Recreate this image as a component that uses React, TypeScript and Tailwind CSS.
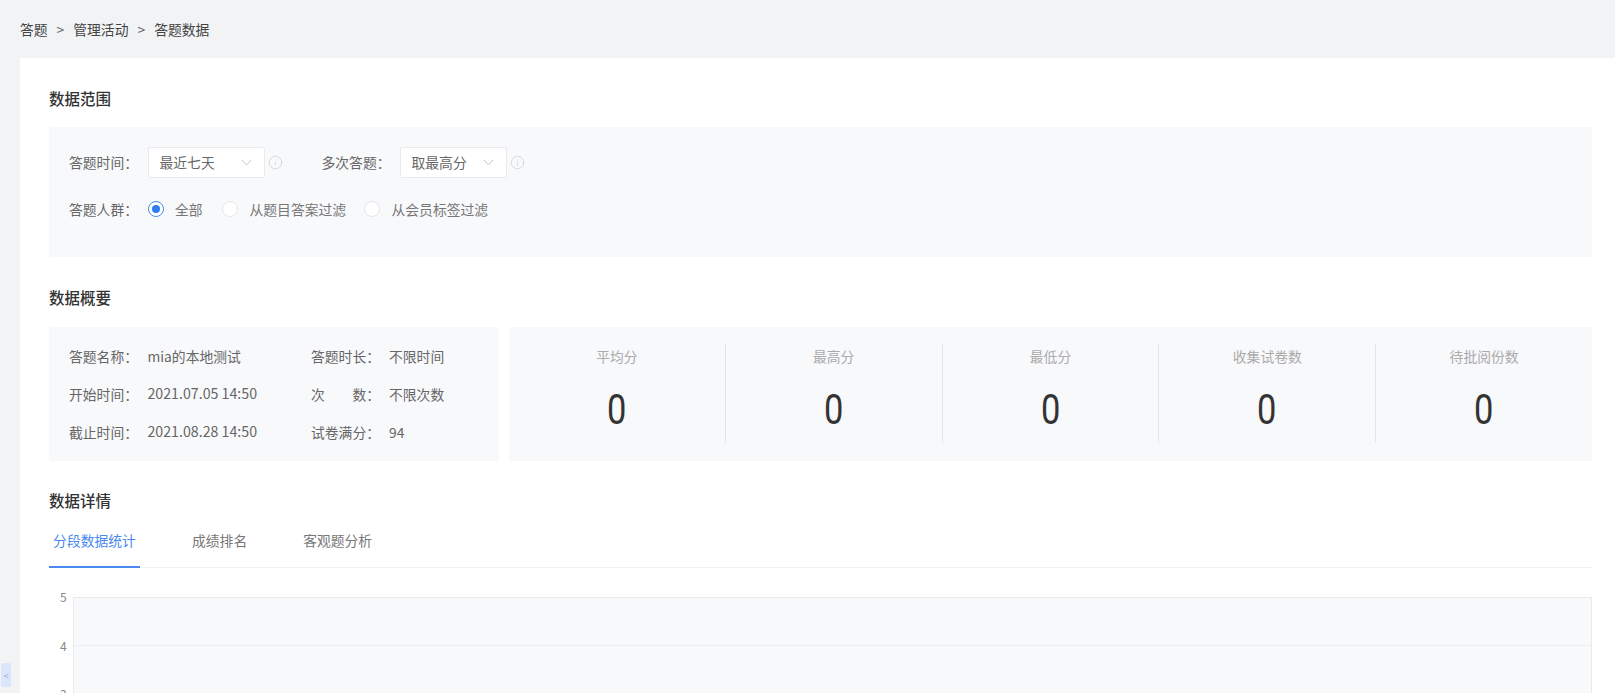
import { Info } from "lucide-react";

const FONT = "font-['Noto_Sans_CJK_SC','Noto_Sans',sans-serif]";

function Heading({ children }: { children: string }) {
  return <h2 className="h-[22px] text-[15.5px] leading-[20px] font-medium text-[#333]">{children}</h2>;
}

function Select({ value, width }: { value: string; width: string }) {
  return (
    <div className={`flex h-[31px] items-center justify-between rounded-[2px] border border-[#e8eaee] bg-white pl-[11px] pr-[12px] text-[13.8px] text-[#666] ${width}`}>
      <span>{value}</span>
      <svg width="11" height="7" viewBox="0 0 11 7" fill="none" stroke="#c4c7cc" strokeWidth="1">
        <path d="M1 1l4.5 5L10 1" />
      </svg>
    </div>
  );
}

function Radio({ label, checked, className }: { label: string; checked?: boolean; className: string }) {
  return (
    <div className={`flex items-center ${className}`}>
      <span className={`flex h-[16px] w-[16px] items-center justify-center rounded-full border bg-white ${checked ? "border-[#4a8af0]" : "border-[#e4e6ea]"}`}>
        {checked && <span className="h-[8px] w-[8px] rounded-full bg-[#2f7bf0]" />}
      </span>
      <span className="ml-[11.5px] text-[13.8px] text-[#777]">{label}</span>
    </div>
  );
}

function Row({ label, value, label2, value2, className, valueClass }: { label: string; value: string; label2: string; value2: string; className?: string; valueClass?: string }) {
  return (
    <div className={`flex h-[20px] items-center text-[13.8px] text-[#666] ${className ?? ""}`}>
      <span className="w-[78.5px]">{label}</span>
      <span className={`w-[163.5px] ${valueClass ?? ""}`}>{value}</span>
      <span className="w-[78px]">{label2}</span>
      <span>{value2}</span>
    </div>
  );
}

const stats = ["平均分", "最高分", "最低分", "收集试卷数", "待批阅份数"];

export default function App() {
  return (
    <div className={`relative h-[693px] overflow-hidden bg-[#f2f3f5] ${FONT}`}>
      {/* 面包屑 */}
      <div className="flex h-[58px] items-center pl-[20px] text-[13.8px] text-[#444]">
        <span>答题</span>
        <span className="ml-[9px] mr-[9px] text-[#666]">&gt;</span>
        <span>管理活动</span>
        <span className="ml-[9px] mr-[9px] text-[#666]">&gt;</span>
        <span>答题数据</span>
      </div>

      <div className="ml-[20px] h-[635px] bg-white pl-[29px] pr-[23px] pt-[30px]">
        {/* 数据范围 */}
        <Heading>数据范围</Heading>
        <div className="mt-[17px] h-[130px] bg-[#f8f9fb] pl-[20px] pt-[20px]">
          <div className="flex items-center">
            <span className="w-[78.5px] text-[13.8px] text-[#666]">答题时间：</span>
            <Select value="最近七天" width="w-[117px]" />
            <Info size={15} strokeWidth={1} className="ml-[3px] text-[#c4c7cc]" />
            <span className="ml-[39px] w-[78px] text-[13.8px] text-[#666]">多次答题：</span>
            <Select value="取最高分" width="w-[107px]" />
            <Info size={15} strokeWidth={1} className="ml-[3px] text-[#c4c7cc]" />
          </div>
          <div className="mt-[21px] flex h-[20px] items-center">
            <span className="w-[78.5px] text-[13.8px] text-[#666]">答题人群：</span>
            <Radio label="全部" checked className="w-[74.5px]" />
            <Radio label="从题目答案过滤" className="w-[142px]" />
            <Radio label="从会员标签过滤" className="" />
          </div>
        </div>

        {/* 数据概要 */}
        <div className="mt-[30px]">
          <Heading>数据概要</Heading>
        </div>
        <div className="mt-[18px] flex h-[134px] gap-[10px]">
          <div className="w-[450px] shrink-0 bg-[#f8f9fb] pl-[20px] pt-[19px]">
            <Row label="答题名称：" value="mia的本地测试" label2="答题时长：" value2="不限时间" />
            <Row className="mt-[18px]" valueClass="text-[14.2px]" label="开始时间：" value="2021.07.05 14:50" label2="次　　数：" value2="不限次数" />
            <Row className="mt-[18px]" valueClass="text-[14.2px]" label="截止时间：" value="2021.08.28 14:50" label2="试卷满分：" value2="94" />
          </div>
          <div className="flex flex-1 items-start bg-[#f8f9fb] pt-[17px]">
            {stats.map((title, i) => (
              <div key={title} className={`flex h-[99px] flex-1 flex-col items-center ${i < 4 ? "border-r border-[#e3e5e9]" : ""}`}>
                <span className="mt-[2px] text-[13.8px] leading-[20px] text-[#aaa]">{title}</span>
                <span className="mt-[14px] inline-block scale-x-[0.82] font-['Roboto'] text-[42px] leading-[60px] text-[#333]">0</span>
              </div>
            ))}
          </div>
        </div>

        {/* 数据详情 */}
        <div className="mt-[29px]">
          <Heading>数据详情</Heading>
        </div>
        <div className="flex h-[56px] border-b border-[#f0f1f3] text-[13.8px]">
          <div className="mb-[-1px] flex w-[91px] justify-center border-b-2 border-[#4a8af0] pt-[17px] leading-[22px] text-[#4a8af0]">分段数据统计</div>
          <div className="ml-[52px] pt-[17px] leading-[22px] text-[#777]">成绩排名</div>
          <div className="ml-[56px] pt-[17px] leading-[22px] text-[#777]">客观题分析</div>
        </div>

        {/* 图表 */}
        <div className="mt-[29px] flex">
          <div className="flex w-[24px] shrink-0 flex-col text-[12px] text-[#888]">
            <span className="mt-[-9px] h-[48.5px] pl-[11px] leading-[18px]">5</span>
            <span className="h-[48.5px] pl-[11px] leading-[18px]">4</span>
            <span className="h-[48.5px] pl-[11px] leading-[18px]">3</span>
          </div>
          <div className="flex-1 border-x border-t border-[#e8eaee] bg-[#f8f9fb]">
            <div className="h-[48px] border-b border-[#eceef1]" />
            <div className="h-[48.5px] border-b border-[#eceef1]" />
          </div>
        </div>
      </div>

      {/* 折叠按钮 */}
      <div className="absolute left-[1px] top-[663px] flex h-[24px] w-[10px] items-center justify-center rounded-[2px] bg-[#dbe6fa] text-[9px] leading-none text-[#8fa8d8]">
        &lt;
      </div>
    </div>
  );
}
